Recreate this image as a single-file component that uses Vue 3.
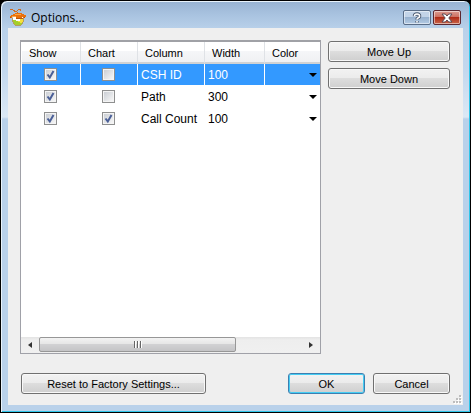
<script setup>
import { ref } from 'vue'

const rows = ref([
  { name: 'CSH ID', width: 100, show: true, chart: false },
  { name: 'Path', width: 300, show: true, chart: false },
  { name: 'Call Count', width: 100, show: true, chart: true }
])
const selected = ref(0)

function move(step) {
  const to = selected.value + step
  if (to < 0 || to >= rows.value.length) return
  const [row] = rows.value.splice(selected.value, 1)
  rows.value.splice(to, 0, row)
  selected.value = to
}
</script>

<template>
  <div class="window">
    <header class="titlebar">
      <svg class="logo" width="16" height="17" viewBox="0 0 16 17" shape-rendering="crispEdges" aria-hidden="true">
        <path d="M3 8h10v5h-1v2h-1v1H5v-1H4v-2H3Z" fill="#fff" />
        <path d="M2 9h1v4H2zM3 13h1v2H3zM13 9h1v4h-1zM12 13h1v2h-1zM4 15h1v1h6v-1h1v1h-1v1H5v-1H4z" fill="#b59a62" />
        <path d="M3 11h3v1h2v1h2v1h2v1h-1v1H5v-1H4v-2H3Z" fill="#a4cf2c" />
        <path d="M10 10h3v3h-1v1h-2v-1H8v-1h2Z" fill="#f5e03c" />
        <path d="M1 6h2V5h2V4h7v1h2v1h2v2h-1v1h-2V8h-1v1H6V8H2v1H1V8H0V7h1Z" fill="#e8700c" />
        <path d="M5 5h6v1H5zM2 7h4v1H2z" fill="#ffa544" />
        <path d="M6 9h7v1H6zM0 8h1v1H0zM14 8h1v1h-1z" fill="#b9560c" />
        <path d="M0 0h3v1H0zM3 1h2v1H3zM4 2h3v1H4zM7 1h1v1H7zM8 0h3v1H8zM10 1h1v1h-1zM7 3h1v1H7z" fill="#cf6c20" />
      </svg>
      <h1>Options...</h1>
      <button class="caption help" type="button" aria-label="Help">
        <svg width="10" height="12" viewBox="0 0 10 12">
          <path d="M2.500 4.200Q2.300 2 5 2t2.600 2.200Q7.600 5.300 6 6 5 6.500 5 7.600M5 9v1.600" fill="none" stroke="#4c5a70" stroke-width="3.400" />
          <path d="M2.500 4.200Q2.300 2 5 2t2.600 2.200Q7.600 5.300 6 6 5 6.500 5 7.600M5 9v1.600" fill="none" stroke="#fff" stroke-width="1.600" />
        </svg>
      </button>
      <button class="caption close" type="button" aria-label="Close">
        <svg width="12" height="10" viewBox="0 0 12 10">
          <path d="M1 1H4.300L6 3 7.700 1H11L7.800 5 11 9H7.700L6 7 4.300 9H1L4.200 5Z" fill="#fff" stroke="#5a4a55" stroke-width="1" />
        </svg>
      </button>
    </header>

    <main class="client">
      <div class="upper">
        <section class="list">
          <table>
            <colgroup>
              <col class="c-show" /><col class="c-chart" /><col class="c-name" /><col class="c-width" /><col />
            </colgroup>
            <thead>
              <tr><th>Show</th><th>Chart</th><th>Column</th><th>Width</th><th>Color</th></tr>
            </thead>
            <tbody>
              <tr v-for="(row, i) in rows" :key="row.name" :class="{ selected: i === selected }" @click="selected = i">
                <td class="tick"><input v-model="row.show" type="checkbox" :aria-label="'Show ' + row.name" /></td>
                <td class="tick"><input v-model="row.chart" type="checkbox" :aria-label="'Chart ' + row.name" /></td>
                <td>{{ row.name }}</td>
                <td>{{ row.width }}</td>
                <td class="color">
                  <button class="drop" type="button" :aria-label="'Color of ' + row.name">
                    <svg width="8" height="4" viewBox="0 0 8 4"><path d="M0 0H8L4 4Z" fill="#000" /></svg>
                  </button>
                </td>
              </tr>
            </tbody>
          </table>
          <div class="scrollbar">
            <button class="arrow" type="button" aria-label="Scroll left">
              <svg width="4" height="6" viewBox="0 0 4 6"><path d="M4 0V6L0 3Z" fill="#333" /></svg>
            </button>
            <div class="track"><div class="thumb"><i></i><i></i><i></i></div></div>
            <button class="arrow" type="button" aria-label="Scroll right">
              <svg width="4" height="6" viewBox="0 0 4 6"><path d="M0 0V6L4 3Z" fill="#333" /></svg>
            </button>
          </div>
        </section>
        <div class="side">
          <button class="btn" type="button" @click="move(-1)">Move Up</button>
          <button class="btn" type="button" @click="move(1)">Move Down</button>
        </div>
      </div>
      <footer class="actions">
        <button class="btn reset" type="button">Reset to Factory Settings...</button>
        <button class="btn small default" type="button">OK</button>
        <button class="btn small" type="button">Cancel</button>
      </footer>
      <svg class="grip" width="9" height="9" viewBox="0 0 9 9" aria-hidden="true">
        <path d="M7 1h2v2H7zM4 4h2v2H4zM7 4h2v2H7zM1 7h2v2H1zM4 7h2v2H4zM7 7h2v2H7z" fill="#fff" />
        <path d="M6 0h2v2H6zM3 3h2v2H3zM6 3h2v2H6zM0 6h2v2H0zM3 6h2v2H3zM6 6h2v2H6z" fill="#bdbdbd" />
      </svg>
    </main>
  </div>
</template>

<style>
body {
  background: #000;
}
</style>

<style scoped>
* {
  box-sizing: border-box;
}
.window {
  display: flex;
  flex-direction: column;
  min-height: 100vh;
  padding: 0 7px 7px;
  border: 1px solid #000;
  border-radius: 7px 7px 0 0;
  box-shadow: inset 1px 1px 0 #e9f3fb, inset -1px -1px 0 #2fc6ea;
  background: linear-gradient(#98b3d2 0, #a9c3e0 14px, #b9d1ea 28px, #c3d8ee 70px, #dbe8f5 116px, #b9d1ea 118px);
  color: #000;
  font: 11px/14px "Liberation Sans", Arial, sans-serif;
}
button {
  margin: 0;
  padding: 0;
  font: inherit;
  color: inherit;
}
svg {
  display: block;
}
.titlebar {
  display: flex;
  align-items: flex-start;
  height: 27px;
  padding: 8px 2px 0;
}
h1 {
  flex: 1;
  margin: 1px 0 0 5px;
  font: 12px/16px "Open Sans", "Noto Sans", sans-serif;
}
.caption {
  display: flex;
  align-items: center;
  justify-content: center;
  width: 28px;
  height: 15px;
  margin: 1px 0 0 2px;
  border: 1px solid #596c86;
  border-radius: 2px;
  box-shadow: inset 0 0 0 1px rgba(255, 255, 255, 0.5);
}
.help {
  background: linear-gradient(#c3d4e8 50%, #98b2cf 50%, #b4cbe4);
}
.close {
  border-color: #5c2730;
  background: linear-gradient(#dc9c92 0, #cc6c5c 50%, #b02c18 50%, #c9664a);
}
.client {
  position: relative;
  display: flex;
  flex: 1;
  flex-direction: column;
  gap: 19px;
  padding: 12px 13px 11px 12px;
  background: #efefef;
}
.upper {
  display: flex;
  flex: 1;
  gap: 7px;
}
.list {
  display: flex;
  flex: 1;
  flex-direction: column;
  min-width: 0;
  border: 1px solid #a0a1a8;
  border-top: 2px solid #a0a1a6;
  background: #fff;
}
table {
  width: 100%;
  table-layout: fixed;
  border-collapse: separate;
  border-spacing: 0;
  padding-left: 1px;
}
.c-show {
  width: 59px;
}
.c-chart {
  width: 57px;
}
.c-name {
  width: 67px;
}
.c-width {
  width: 60px;
}
th {
  height: 22px;
  padding: 2px 0 0 7px;
  border-right: 1px solid #dfe2e6;
  border-bottom: 2px solid #d0d2d4;
  background: linear-gradient(#fff 45%, #f5f6f8 45%, #f0f1f3);
  text-align: left;
  font-weight: normal;
}
th:last-child,
td:last-child {
  border-right: 0;
}
td {
  height: 22px;
  padding: 0 0 0 3px;
  border-right: 1px solid #fff;
  border-bottom: 1px solid #fff;
  font-size: 12px;
}
.selected td {
  background: #3399ff;
  color: #fff;
}
.tick {
  padding: 0 1px 0 0;
  text-align: center;
}
.tick input {
  appearance: none;
  display: block;
  width: 13px;
  height: 13px;
  margin: 0 auto;
  border: 1px solid #8e8f8f;
  background: linear-gradient(135deg, #cbcfd5, #f6f6f6) center / 9px 9px no-repeat, #f4f4f4;
}
.tick input:checked {
  background: url("data:image/svg+xml,%3Csvg xmlns='http://www.w3.org/2000/svg' viewBox='0 0 11 11'%3E%3Cpath d='M2.500 5.500 4.800 8.500 8.500 2' fill='none' stroke='%234a5f97' stroke-width='2'/%3E%3C/svg%3E") center / 11px 11px no-repeat, linear-gradient(135deg, #cbcfd5, #f6f6f6) center / 9px 9px no-repeat, #f4f4f4;
}
.drop {
  display: block;
  margin: 0 3px 0 auto;
  border: 0;
  background: none;
}
.scrollbar {
  display: flex;
  height: 16px;
  margin-top: auto;
  background: linear-gradient(#e3e3e3, #eee 3px, #f0f0f0);
}
.arrow {
  display: flex;
  align-items: center;
  justify-content: center;
  width: 18px;
  border: 0;
  background: none;
}
.track {
  flex: 1;
}
.thumb {
  display: flex;
  align-items: center;
  justify-content: center;
  gap: 1px;
  width: 75%;
  height: 15px;
  border: 1px solid #979797;
  border-radius: 2px;
  background: linear-gradient(#f3f3f3 0, #e6e6e6 45%, #d1d1d3 50%, #c4c4c6);
}
.thumb i {
  width: 2px;
  height: 7px;
  border-left: 1px solid #666;
  border-right: 1px solid #fff;
}
.side {
  display: flex;
  flex-direction: column;
  gap: 6px;
  width: 122px;
  padding-top: 1px;
}
.btn {
  height: 21px;
  border: 1px solid #707070;
  border-radius: 3px;
  background: linear-gradient(#f2f2f2 0, #ebebeb 50%, #dddddd 50%, #cfcfcf);
  box-shadow: inset 0 0 0 1px #f8f8f8;
  text-align: center;
}
.actions {
  display: flex;
  gap: 8px;
  padding-left: 1px;
}
.reset {
  width: 185px;
  margin-right: auto;
}
.small {
  width: 77px;
}
.default {
  border-color: #3c7fb1;
  box-shadow: inset 0 0 0 1px #45cdf3;
}
.grip {
  position: absolute;
  right: 1px;
  bottom: 1px;
}
</style>
